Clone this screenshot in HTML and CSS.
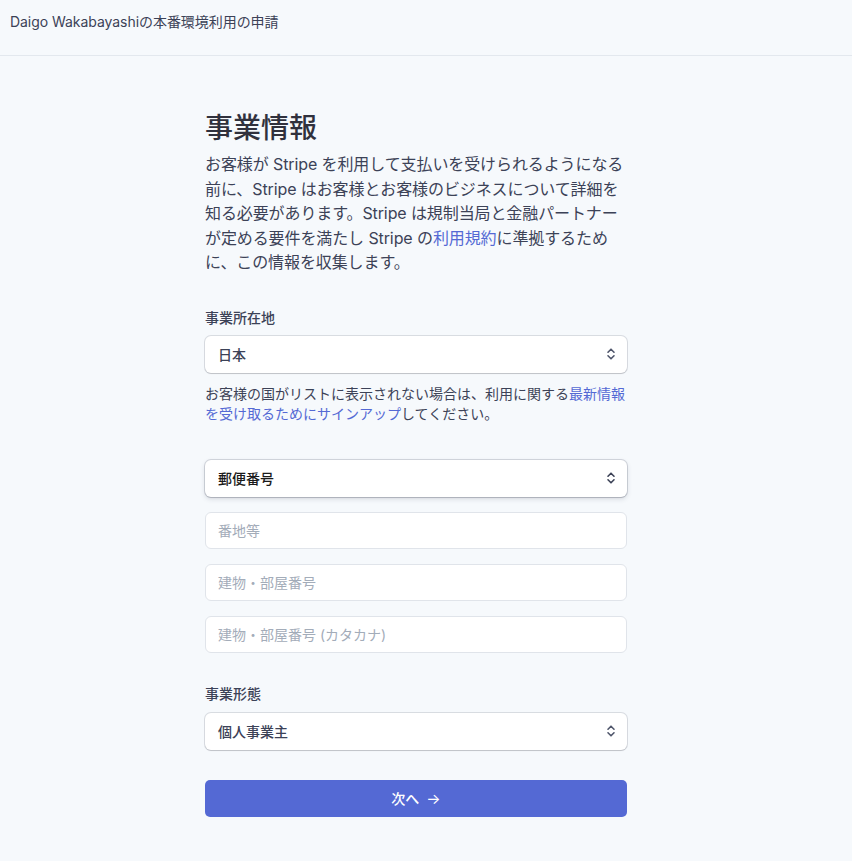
FILE: index.html
```html
<!DOCTYPE html>
<html lang="ja">
<head>
<meta charset="utf-8">
<title>事業情報</title>
<link rel="stylesheet" href="styles.css">
</head>
<body>
<header class="topbar">
  <div class="topbar-title">Daigo Wakabayashiの本番環境利用の申請</div>
</header>
<main class="main">
  <h1 class="title">事業情報</h1>
  <p class="lead">お客様が Stripe を利用して支払いを受けられるようになる<br>前に、Stripe はお客様とお客様のビジネスについて詳細を<br>知る必要があります。Stripe は規制当局と金融パートナー<br>が定める要件を満たし Stripe の<a class="link" href="#">利用規約</a>に準拠するため<br>に、この情報を収集します。</p>

  <section class="field field-country">
    <div class="label">事業所在地</div>
    <div class="select">
      <span class="select-value">日本</span>
      <svg class="chev" width="10" height="14" viewBox="0 0 10 14"><path d="M2 5.2L5 2.2L8 5.2M2 8.8L5 11.8L8 8.8" fill="none" stroke="#4f566b" stroke-width="1.6" stroke-linecap="round" stroke-linejoin="round"/></svg>
    </div>
    <p class="help">お客様の国がリストに表示されない場合は、利用に関する<a class="link" href="#">最新情報<br>を受け取るためにサインアップ</a>してください。</p>
  </section>

  <section class="address">
    <div class="select select-focus">
      <span class="select-value select-value-dark">郵便番号</span>
      <svg class="chev" width="10" height="14" viewBox="0 0 10 14"><path d="M2 5.2L5 2.2L8 5.2M2 8.8L5 11.8L8 8.8" fill="none" stroke="#3c4257" stroke-width="1.6" stroke-linecap="round" stroke-linejoin="round"/></svg>
    </div>
    <div class="input"><span class="placeholder">番地等</span></div>
    <div class="input"><span class="placeholder">建物・部屋番号</span></div>
    <div class="input"><span class="placeholder">建物・部屋番号 (カタカナ)</span></div>
  </section>

  <section class="field field-type">
    <div class="label">事業形態</div>
    <div class="select">
      <span class="select-value">個人事業主</span>
      <svg class="chev" width="10" height="14" viewBox="0 0 10 14"><path d="M2 5.2L5 2.2L8 5.2M2 8.8L5 11.8L8 8.8" fill="none" stroke="#4f566b" stroke-width="1.6" stroke-linecap="round" stroke-linejoin="round"/></svg>
    </div>
  </section>

  <button class="btn" type="button">次へ <span class="arrow">→</span></button>
</main>
</body>
</html>
```

FILE: styles.css
```css
* { box-sizing: border-box; }
html, body {
  margin: 0;
  padding: 0;
  background: #f6f9fc;
  font-family: Inter, "Noto Sans CJK JP", sans-serif;
  color: #3c4257;
}
.topbar {
  height: 56px;
  border-bottom: 1px solid #e3e8ee;
  padding: 12px 10px 0;
}
.topbar-title {
  font-size: 14px;
  line-height: 20px;
  color: #3c4257;
  letter-spacing: -0.05px;
}
.main {
  width: 422px;
  margin-left: 205px;
  padding-top: 54px;
  padding-bottom: 40px;
}
.title {
  margin: 0;
  font-size: 28px;
  line-height: 36px;
  font-weight: 500;
  color: #30313d;
}
.lead {
  margin: 6px 0 0;
  font-size: 16px;
  line-height: 24.6px;
  color: #3c4257;
  white-space: nowrap;
  letter-spacing: -0.1px;
}
.link {
  color: #5469d4;
  text-decoration: none;
}
.field-country { margin-top: 33px; }
.label {
  font-size: 14px;
  line-height: 20px;
  font-weight: 500;
  color: #3c4257;
}
.select {
  margin-top: 8px;
  height: 37px;
  background: #fff;
  border-radius: 6px;
  box-shadow: 0 0 0 1px rgba(60, 66, 87, 0.16), 0 1px 1px rgba(0, 0, 0, 0.12);
  display: flex;
  align-items: center;
  justify-content: space-between;
  padding: 0 11px 0 13px;
}
.select-value {
  font-size: 14px;
  font-weight: 500;
  color: #3c4257;
}
.select-value-dark { color: #1a1a1a; }
.chev { display: block; }
.help {
  margin: 11px 0 0;
  font-size: 14px;
  line-height: 20px;
  color: #3c4257;
  white-space: nowrap;
}
.address {
  margin-top: 36px;
  display: flex;
  flex-direction: column;
  gap: 15px;
}
.address .select { margin-top: 0; }
.select-focus {
  box-shadow: 0 0 0 1px rgba(60, 66, 87, 0.18), 0 2px 5px rgba(60, 66, 87, 0.18), 0 1px 1px rgba(0, 0, 0, 0.1);
}
.input {
  height: 37px;
  background: #fff;
  border: 1px solid #e0e4ea;
  border-radius: 6px;
  display: flex;
  align-items: center;
  padding: 0 12px;
}
.placeholder {
  font-size: 14px;
  color: #a3acb9;
}
.field-type { margin-top: 31px; }
.field-type .select { margin-top: 9px; }
.btn {
  margin-top: 30px;
  width: 100%;
  height: 37px;
  border: 0;
  border-radius: 5px;
  background: #5469d4;
  color: #fff;
  font-family: Inter, "Noto Sans CJK JP", sans-serif;
  font-size: 14px;
  font-weight: 500;
  display: flex;
  align-items: center;
  justify-content: center;
  gap: 7px;
}
.arrow { font-size: 15px; font-weight: 400; }
```
